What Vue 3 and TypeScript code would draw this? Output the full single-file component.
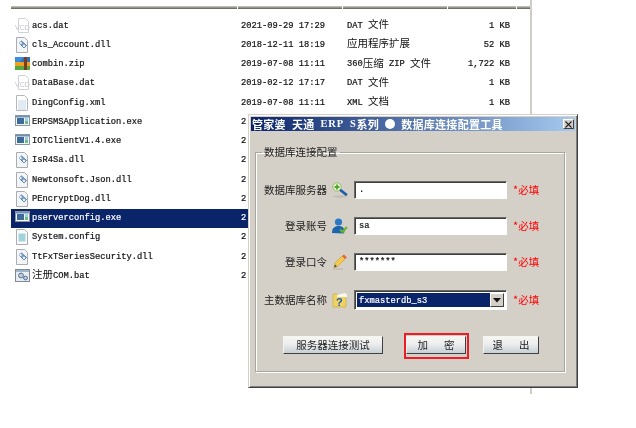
<script setup lang="ts">
type Seg = { t: string; c?: boolean }
type Row = { icon: string; name: Seg[]; date: string; type: Seg[]; size: string; sel?: boolean }
const c = (t: string): Seg => ({ t, c: true })
const l = (t: string): Seg => ({ t })
const rows: Row[] = [
  { icon: 'vcd', name: [l('acs.dat')], date: '2021-09-29 17:29', type: [l('DAT '), c('文件')], size: '1 KB' },
  { icon: 'dll', name: [l('cls_Account.dll')], date: '2018-12-11 18:19', type: [c('应用程序扩展')], size: '52 KB' },
  { icon: 'zip', name: [l('combin.zip')], date: '2019-07-08 11:11', type: [l('360'), c('压缩'), l(' ZIP '), c('文件')], size: '1,722 KB' },
  { icon: 'vcd', name: [l('DataBase.dat')], date: '2019-02-12 17:17', type: [l('DAT '), c('文件')], size: '1 KB' },
  { icon: 'xml', name: [l('DingConfig.xml')], date: '2019-07-08 11:11', type: [l('XML '), c('文档')], size: '1 KB' },
  { icon: 'exe', name: [l('ERPSMSApplication.exe')], date: '2', type: [], size: '' },
  { icon: 'exe', name: [l('IOTClientV1.4.exe')], date: '2', type: [], size: '' },
  { icon: 'dll', name: [l('IsR4Sa.dll')], date: '2', type: [], size: '' },
  { icon: 'dll', name: [l('Newtonsoft.Json.dll')], date: '2', type: [], size: '' },
  { icon: 'dll', name: [l('PEncryptDog.dll')], date: '2', type: [], size: '' },
  { icon: 'exe', name: [l('pserverconfig.exe')], date: '2', type: [], size: '', sel: true },
  { icon: 'cfg', name: [l('System.config')], date: '2', type: [], size: '' },
  { icon: 'dll', name: [l('TtFxTSeriesSecurity.dll')], date: '2', type: [], size: '' },
  { icon: 'bat', name: [c('注册'), l('COM.bat')], date: '2', type: [], size: '' }
]
const fields = [
  { label: '数据库服务器', icon: 'search', value: '.' },
  { label: '登录账号', icon: 'user', value: 'sa' },
  { label: '登录口令', icon: 'pen', value: '*******' }
]
</script>

<template>
  <div class="page">
    <div class="explorer">
      <div class="head">
        <i class="h1"></i><i class="h2"></i><i class="h3"></i><i class="h4"></i><i class="h5"></i>
      </div>
      <div class="list">
        <div v-for="r in rows" :key="r.name.map(s => s.t).join('')" class="row" :class="{ sel: r.sel }">
          <span class="ic">
            <svg v-if="r.icon === 'vcd'" width="16" height="16" viewBox="0 0 16 16">
              <path d="M3.500 .5h7l3 3v11h-10z" fill="#fff" stroke="#d0d3d6" />
              <text x="0" y="11.500" class="vcd">VCD</text>
            </svg>
            <svg v-else-if="r.icon === 'dll'" width="16" height="16" viewBox="0 0 16 16">
              <path d="M1.500 .5h8l3 3v12h-11z" fill="#f4f5f7" stroke="#a9adb3" />
              <path d="M4 6l2.500-2 5 4.500-2.500 2.500z" fill="#7aa3d0" stroke="#3e6896" stroke-width=".8" />
              <circle cx="5.500" cy="6" r="1.200" fill="#eef4fa" />
              <circle cx="9" cy="9" r="1.200" fill="#eef4fa" />
            </svg>
            <svg v-else-if="r.icon === 'zip'" width="16" height="16" viewBox="0 0 16 16">
              <rect x="0" y="1" width="15" height="5" fill="#3a8fd8" />
              <path d="M5 6l4-5h6v5z" fill="#2f6fb8" />
              <rect x="0" y="6" width="15" height="4" fill="#f0a020" />
              <rect x="0" y="10" width="15" height="4" fill="#56a83e" />
              <rect x="9" y="1" width="3" height="13" fill="#7a3d22" />
            </svg>
            <svg v-else-if="r.icon === 'xml'" width="16" height="16" viewBox="0 0 16 16">
              <path d="M1.500 .5h8l3 3v12h-11z" fill="#fff" stroke="#b4b8be" />
              <path d="M3 6h8M3 8h8M3 10h8M3 12h8M3 14h8" stroke="#c4d5e6" stroke-width="1" />
            </svg>
            <svg v-else-if="r.icon === 'exe'" width="16" height="16" viewBox="0 0 16 16">
              <rect x=".5" y="1.500" width="14" height="10" fill="#f3f5f7" stroke="#8a96a2" />
              <rect x="1" y="2" width="13" height="1.500" fill="#6f8fb4" />
              <rect x="2" y="4" width="7" height="6" fill="#3f6a9c" />
              <rect x="10" y="4" width="3" height="3" fill="#9fd0e6" />
              <rect x="10" y="7" width="3" height="3" fill="#6cc07c" />
            </svg>
            <svg v-else-if="r.icon === 'cfg'" width="16" height="16" viewBox="0 0 16 16">
              <path d="M1.500 .5h8l3 3v12h-11z" fill="#fbfbfb" stroke="#a9adb3" />
              <rect x="3.500" y="4.500" width="7" height="8" fill="#a5d3dc" />
            </svg>
            <svg v-else width="16" height="16" viewBox="0 0 16 16">
              <rect x=".5" y="1.500" width="14" height="12" fill="#e9edf1" stroke="#7e8a96" />
              <rect x="1" y="2" width="13" height="2" fill="#a2b6ca" />
              <circle cx="6" cy="7.500" r="2.400" fill="#c2d0df" stroke="#50708f" />
              <circle cx="10.500" cy="10" r="1.900" fill="#c2d0df" stroke="#50708f" />
            </svg>
          </span>
          <span class="name"><span v-for="(s, i) in r.name" :key="i" :class="{ cjk: s.c }">{{ s.t }}</span></span>
          <span class="date">{{ r.date }}</span>
          <span class="type"><span v-for="(s, i) in r.type" :key="i" :class="{ cjk: s.c }">{{ s.t }}</span></span>
          <span class="size">{{ r.size }}</span>
        </div>
      </div>
    </div>

    <div class="dialog">
      <div class="title">
        <span class="title-text"><span class="tc">管家婆</span><span class="gap"></span><span class="tc">天通</span><span class="gap"></span><span class="tl">ERP</span><span class="gap"></span><span class="tl">S</span><span class="tc">系列</span><span class="gap"></span><span class="dot"></span><span class="gap"></span><span class="tc">数据库连接配置工具</span></span>
        <span class="close"><svg width="7" height="7" viewBox="0 0 7 7"><path d="M.5 .5l6 6M6.500 .5l-6 6" stroke="#222" stroke-width="1.100" /></svg></span>
      </div>
      <fieldset class="group">
        <legend>数据库连接配置</legend>
        <div class="form">
          <div v-for="f in fields" :key="f.label" class="frow">
            <span class="flabel">{{ f.label }}</span>
            <span class="ficon">
              <svg v-if="f.icon === 'search'" width="16" height="16" viewBox="0 0 16 16">
                <ellipse cx="8" cy="14.500" rx="7" ry="1.200" fill="#c0bdb6" />
                <circle cx="5" cy="5" r="4.200" fill="#e4f2c8" stroke="#9ab870" />
                <path d="M2.600 5h4.800M5 2.600v4.800" stroke="#4da72e" stroke-width="1.800" />
                <path d="M9 8.500l5 4" stroke="#1d5fa8" stroke-width="2.800" stroke-linecap="round" />
              </svg>
              <svg v-else-if="f.icon === 'user'" width="16" height="16" viewBox="0 0 16 16">
                <circle cx="6.500" cy="4" r="3.600" fill="#2a79c4" />
                <path d="M0 15c0-5 2.500-7 6.500-7s6 2 6 6l-1 1.500z" fill="#1c65ae" />
                <path d="M8 11.500l2.500 2.500 4.500-5" fill="none" stroke="#6ab42c" stroke-width="2" />
              </svg>
              <svg v-else width="16" height="16" viewBox="0 0 16 16">
                <path d="M1 15h10" stroke="#c0bdb6" stroke-width="1.500" />
                <path d="M3 9l7-7 3 3-7 7-4 1.500z" fill="#f5c94a" stroke="#c39c3a" stroke-width=".6" />
                <path d="M10 2l2-1.500 3 3-2 1.500z" fill="#e0683a" />
                <path d="M2 13.500l1-3 2 2z" fill="#5a4a30" />
              </svg>
            </span>
            <span class="input"><span class="val">{{ f.value }}</span></span>
            <span class="req">*<span class="cjk11">必填</span></span>
          </div>
          <div class="frow combo-row">
            <span class="flabel">主数据库名称</span>
            <span class="ficon">
              <svg width="16" height="16" viewBox="0 0 16 16">
                <path d="M1 2h4l1 1h8v12H1z" fill="#f0d264" stroke="#c8a838" stroke-width=".6" />
                <path d="M5 3l8-2 2 2v2H5z" fill="#fbfaf2" />
                <text x="4" y="14" class="q">?</text>
              </svg>
            </span>
            <span class="combo">
              <span class="combo-val">fxmasterdb_s3</span>
              <span class="combo-btn"><svg width="8" height="5" viewBox="0 0 8 5"><path d="M0 0h8L4 4.500z" fill="#111" /></svg></span>
            </span>
            <span class="req">*<span class="cjk11">必填</span></span>
          </div>
        </div>
        <div class="buttons">
          <span class="btn b1">服务器连接测试</span>
          <span class="focus"><span class="btn b2">加<i class="sp"></i>密</span></span>
          <span class="btn b3">退<i class="sp"></i>出</span>
        </div>
      </fieldset>
    </div>
  </div>
</template>

<style>
html, body { margin: 0; background: #fff; }
</style>

<style scoped>
.page {
  position: relative;
  width: 636px;
  height: 428px;
  overflow: hidden;
  background: #fff;
  font-family: "Liberation Mono", "Noto Sans CJK SC", monospace;
  font-size: 8.75px;
  line-height: 12px;
  color: #111;
  -webkit-text-stroke: .2px currentColor;
  filter: blur(.3px);
}
.explorer {
  width: 519px;
  margin-left: 11px;
  height: 388px;
  border-right: 2px solid #d0cdc6;
  box-sizing: content-box;
  padding-top: 6px;
}
.head {
  display: flex;
  height: 3px;
  background: linear-gradient(#cfcfc8, #5d5d58);
}
.head i {
  display: block;
  height: 3px;
  border-right: 1px solid #fff;
  box-sizing: border-box;
}
.h1 { width: 227px; }
.h2, .h3 { width: 105px; }
.h4 { width: 69px; }
.h5 { width: 13px; border-right: 0 !important; }
.list {
  position: absolute;
  left: 11px;
  top: 16px;
  width: 240px;
}
.row {
  position: relative;
  display: flex;
  align-items: center;
  height: 19.25px;
  width: 519px;
}
.row.sel { width: 238px; }
.row.sel .name, .row.sel .date { color: #fff; }
.row.sel::before {
  content: "";
  position: absolute;
  inset: 0;
  background: #0a246a;
}
.ic { position: relative; width: 21px; display: flex; padding-left: 4px; box-sizing: border-box; flex: none; height: 16px; }
.ic svg { flex: none; }
.vcd { font: 7px "Liberation Sans", sans-serif; fill: #c0c4ca; stroke: none; -webkit-text-stroke: 0; }
.name { position: relative; width: 209px; flex: none; white-space: pre; display: flex; align-items: center; }
.date { position: relative; width: 106px; flex: none; white-space: pre; }
.type { width: 90px; flex: none; white-space: pre; display: flex; align-items: center; }
.size { width: 73px; flex: none; text-align: right; white-space: pre; }
.cjk { font-family: "Noto Sans CJK SC", sans-serif; font-size: 10.5px; line-height: 10px; height: 10px; margin-top: -3px; -webkit-text-stroke: 0; }
.dialog {
  position: absolute;
  left: 248px;
  top: 114px;
  width: 330px;
  height: 274px;
  box-sizing: border-box;
  background: #d4d0c8;
  border: 1px solid;
  border-color: #d4d0c8 #404040 #404040 #d4d0c8;
  box-shadow: inset 1px 1px 0 #fff, inset -1px -1px 0 #808080;
  padding: 2px;
  display: flex;
  flex-direction: column;
  -webkit-text-stroke: 0;
}
.title {
  height: 14px;
  flex: none;
  display: flex;
  align-items: center;
  justify-content: space-between;
  padding: 0 1px 0 1px;
  background: linear-gradient(90deg, #0a246a, #a6caf0);
  color: #fff;
  white-space: pre;
}
.title-text { display: flex; align-items: center; }
.tc { font-family: "Noto Sans CJK SC", sans-serif; font-size: 11px; font-weight: 700; letter-spacing: .3px; }
.tl { font-family: "Liberation Serif", serif; font-size: 10.5px; font-weight: 700; letter-spacing: .8px; }
.dot { display: block; width: 10px; height: 10px; border-radius: 50%; background: #fff; }
.gap { display: inline-block; width: 6px; }
.close {
  width: 11px;
  height: 10px;
  box-sizing: border-box;
  background: #d4d0c8;
  border: 1px solid;
  border-color: #fff #404040 #404040 #fff;
  display: flex;
  align-items: center;
  justify-content: center;
}
.group {
  margin: 14px 10px 0 4px;
  padding: 0;
  height: 227px;
  box-sizing: border-box;
  border: 1px solid #a8a6a0;
  box-shadow: 1px 1px 0 #fff, inset 1px 1px 0 #fff;
  min-width: 0;
  font-family: "Noto Sans CJK SC", sans-serif;
  font-size: 10.5px;
  line-height: 14px;
  color: #222;
}
legend { padding: 0 2px; margin-left: 6px; line-height: 14px; }
.form { display: flex; flex-direction: column; gap: 18px; padding-top: 22px; }
.frow { display: flex; align-items: center; height: 18px; }
.combo-row { height: 20px; margin-top: 1px; }
.flabel { width: 71px; text-align: right; flex: none; white-space: nowrap; }
.ficon { width: 27px; flex: none; display: flex; padding-left: 5px; box-sizing: border-box; }
.input {
  width: 153px;
  height: 18px;
  box-sizing: border-box;
  background: #fff;
  border: 1px solid;
  border-color: #6a6a66 #fff #fff #6a6a66;
  box-shadow: inset 1px 1px 0 #404040;
  display: flex;
  align-items: center;
  padding-left: 4px;
  font-family: "Liberation Mono", monospace;
  font-size: 8.75px;
  -webkit-text-stroke: .2px #111;
  color: #111;
  flex: none;
}
.req { margin-left: 6px; color: #f00; font-size: 11px; white-space: nowrap; line-height: 14px; position: relative; top: -1px; }
.cjk11 { font-size: 10.5px; }
.combo {
  width: 153px;
  height: 20px;
  box-sizing: border-box;
  flex: none;
  display: flex;
  background: #fff;
  border: 1px solid;
  border-color: #6a6a66 #fff #fff #6a6a66;
  box-shadow: inset 1px 1px 0 #404040;
  padding: 2px;
}
.combo-val {
  flex: 1;
  background: #0a246a;
  color: #fff;
  font-family: "Liberation Mono", monospace;
  font-size: 8.75px;
  -webkit-text-stroke: .2px #fff;
  line-height: 16px;
  padding-left: 2px;
}
.combo-btn {
  width: 14px;
  background: #d4d0c8;
  border: 1px solid;
  border-color: #fff #404040 #404040 #fff;
  box-sizing: border-box;
  display: flex;
  align-items: center;
  justify-content: center;
}
.buttons { display: flex; align-items: flex-start; padding-left: 27px; margin-top: 23px; height: 26px; }
.btn {
  display: flex;
  align-items: center;
  justify-content: center;
  height: 18px;
  box-sizing: border-box;
  margin-top: 3px;
  background: linear-gradient(#f6f6f4, #eceded 45%, #c6d0d6);
  border: 1px solid;
  border-color: #f4f4f2 #404040 #404040 #f4f4f2;
  white-space: nowrap;
  color: #222;
}
.b1 { width: 100px; }
.b2 { width: 60px; margin-top: 0; }
.b3 { width: 56px; margin-left: 14px; }
.focus { border: 2px solid #ee1c25; padding: 1px 1px 3px 0; margin-left: 21px; display: flex; box-sizing: border-box; height: 26px; }
.sp { display: inline-block; width: 16px; }
.q { font: 700 11px "Liberation Sans", sans-serif; fill: #1d5fa8; }
</style>
